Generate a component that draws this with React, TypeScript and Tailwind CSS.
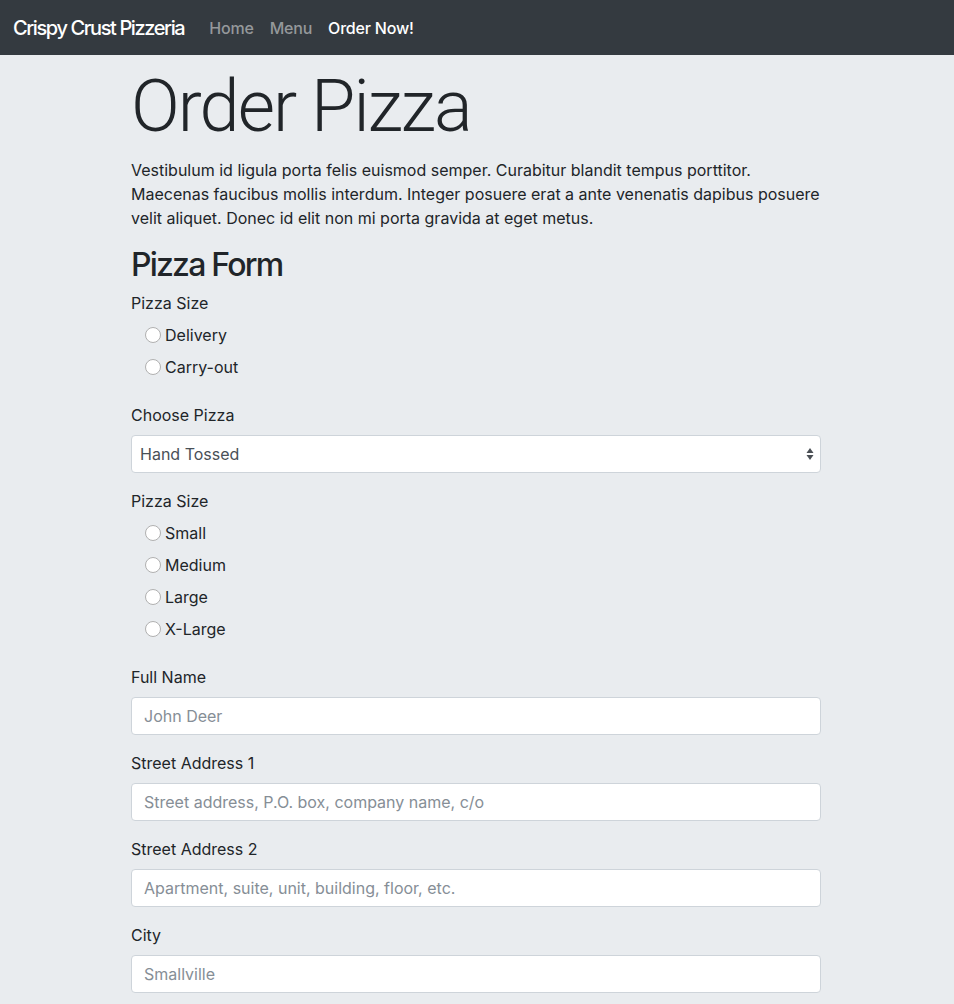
import React from 'react';

const font = { fontFamily: 'Inter, "Noto Sans", "Liberation Sans", sans-serif' };

function Radio({ label }: { label: string }) {
  return (
    <label className="flex h-6 items-center pl-[14px] text-base leading-6 text-[#212529]">
      <span className="mr-[4px] inline-block h-4 w-4 rounded-full border border-[#b0b0b0] bg-white" />
      {label}
    </label>
  );
}

function RadioGroup({ title, options }: { title: string; options: string[] }) {
  return (
    <div className="mb-6 flex flex-col">
      <p className="mb-2 leading-6">{title}</p>
      <div className="flex flex-col gap-2">
        {options.map((o) => (
          <Radio key={o} label={o} />
        ))}
      </div>
    </div>
  );
}

function TextField({ label, placeholder }: { label: string; placeholder: string }) {
  return (
    <div className="mb-4">
      <p className="mb-2 leading-6">{label}</p>
      <input
        placeholder={placeholder}
        className="block h-[38px] w-full rounded border border-[#ced4da] bg-white px-3 text-base text-[#495057] placeholder:text-[#868e96] outline-none"
        style={font}
      />
    </div>
  );
}

export default function App() {
  return (
    <div className="min-h-screen bg-[#e9ecef] text-[#212529]" style={font}>
      <header className="flex h-[55px] items-center bg-[#343a40] px-[13px]">
        <a className="mr-[25px] text-[20px] font-medium tracking-[-1.4px] text-white">Crispy Crust Pizzeria</a>
        <nav className="flex items-center gap-4 text-base font-medium tracking-[-0.2px]">
          <a className="text-[#95989b]">Home</a>
          <a className="text-[#95989b]">Menu</a>
          <a className="text-white">Order Now!</a>
        </nav>
      </header>

      <main className="mx-auto w-[720px] pl-[14px] pr-[16px] pt-[9px]">
        <h1
          className="mb-2 text-[72px] font-light leading-[1.2] tracking-[-1.9px]"
          style={{ fontFamily: 'Roboto, Inter, sans-serif' }}
        >
          Order Pizza
        </h1>
        <p className="mb-4 text-base leading-6">
          Vestibulum id ligula porta felis euismod semper. Curabitur blandit tempus porttitor. Maecenas faucibus
          mollis interdum. Integer posuere erat a ante venenatis dapibus posuere velit aliquet. Donec id elit non mi
          porta gravida at eget metus.
        </p>

        <h2 className="mb-[6px] text-[32px] font-medium leading-[1.2] tracking-[-1.8px]">Pizza Form</h2>

        <form>
          <RadioGroup title="Pizza Size" options={['Delivery', 'Carry-out']} />

          <div className="mb-4">
            <p className="mb-2 leading-6">Choose Pizza</p>
            <div className="flex h-[38px] w-full items-center justify-between rounded border border-[#ced4da] bg-white pl-2 pr-[6px] text-[#495057]">
              <span>Hand Tossed</span>
              <svg width="8" height="14" viewBox="0 0 8 14" className="text-[#4a4f55]">
                <path d="M4 1 L7.5 6 H0.5 Z" fill="currentColor" />
                <path d="M4 13 L7.5 8 H0.5 Z" fill="currentColor" />
              </svg>
            </div>
          </div>

          <RadioGroup title="Pizza Size" options={['Small', 'Medium', 'Large', 'X-Large']} />

          <TextField label="Full Name" placeholder="John Deer" />
          <TextField label="Street Address 1" placeholder="Street address, P.O. box, company name, c/o" />
          <TextField label="Street Address 2" placeholder="Apartment, suite, unit, building, floor, etc." />
          <TextField label="City" placeholder="Smallville" />
        </form>
      </main>
    </div>
  );
}
